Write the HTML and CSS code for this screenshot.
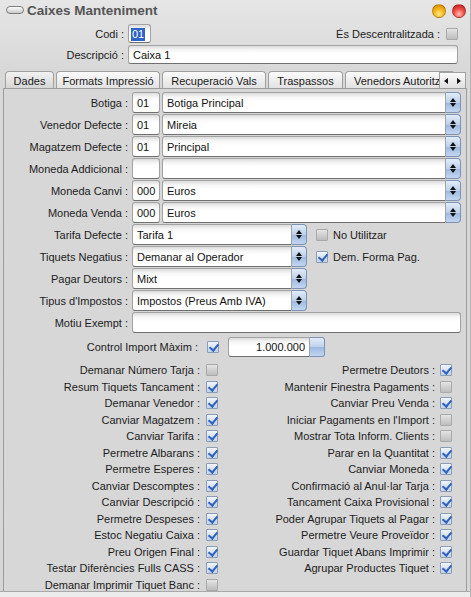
FILE: index.html
```html
<!DOCTYPE html>
<html lang="ca">
<head>
<meta charset="utf-8">
<title>Caixes Manteniment</title>
<link rel="stylesheet" href="styles.css">
</head>
<body>
<div class="window">
  <div class="titlebar">
    <span class="pill"></span>
    <span class="title">Caixes Manteniment</span>
    <span class="lights"><span class="light amber"></span><span class="light red"></span></span>
  </div>

  <div class="head">
    <div class="hrow">
      <span class="hlabel">Codi :</span>
      <span class="field codi"><span class="sel">01</span></span>
      <span class="hright">És Descentralitzada :</span>
      <span class="cb"></span>
    </div>
    <div class="hrow">
      <span class="hlabel">Descripció :</span>
      <span class="field descr">Caixa 1</span>
    </div>
  </div>

  <div class="tabs">
    <span class="tab active">Dades</span>
    <span class="tab t2">Formats Impressió</span>
    <span class="tab t3">Recuperació Vals</span>
    <span class="tab t4">Traspassos</span>
    <span class="tab t5">Venedors Autoritzats</span>
    <span class="tabnav"><span class="tri left"></span><span class="tri right"></span></span>
  </div>

  <div class="panel">
    <div class="row">
      <span class="lbl">Botiga :</span>
      <span class="field code">01</span>
      <span class="combo wide"><span class="field ctext">Botiga Principal</span><span class="spin"></span></span>
    </div>
    <div class="row">
      <span class="lbl">Venedor Defecte :</span>
      <span class="field code">01</span>
      <span class="combo wide"><span class="field ctext">Mireia</span><span class="spin"></span></span>
    </div>
    <div class="row">
      <span class="lbl">Magatzem Defecte :</span>
      <span class="field code">01</span>
      <span class="combo wide"><span class="field ctext">Principal</span><span class="spin"></span></span>
    </div>
    <div class="row">
      <span class="lbl">Moneda Addicional :</span>
      <span class="field code"></span>
      <span class="combo wide"><span class="field ctext"></span><span class="spin"></span></span>
    </div>
    <div class="row">
      <span class="lbl">Moneda Canvi :</span>
      <span class="field code">000</span>
      <span class="combo wide"><span class="field ctext">Euros</span><span class="spin"></span></span>
    </div>
    <div class="row">
      <span class="lbl">Moneda Venda :</span>
      <span class="field code">000</span>
      <span class="combo wide"><span class="field ctext">Euros</span><span class="spin"></span></span>
    </div>
    <div class="row">
      <span class="lbl">Tarifa Defecte :</span>
      <span class="combo short"><span class="field ctext">Tarifa 1</span><span class="spin"></span></span>
      <span class="cb side"></span><span class="sidetext">No Utilitzar</span>
    </div>
    <div class="row">
      <span class="lbl">Tiquets Negatius :</span>
      <span class="combo short"><span class="field ctext">Demanar al Operador</span><span class="spin"></span></span>
      <span class="cb on side"></span><span class="sidetext">Dem. Forma Pag.</span>
    </div>
    <div class="row">
      <span class="lbl">Pagar Deutors :</span>
      <span class="combo short"><span class="field ctext">Mixt</span><span class="spin"></span></span>
    </div>
    <div class="row">
      <span class="lbl">Tipus d'Impostos :</span>
      <span class="combo short"><span class="field ctext">Impostos (Preus Amb IVA)</span><span class="spin"></span></span>
    </div>
    <div class="row">
      <span class="lbl">Motiu Exempt :</span>
      <span class="field motiu"></span>
    </div>
    <div class="row ctrl">
      <span class="ctrl-lbl">Control Import Màxim :</span>
      <span class="cb on"></span>
      <span class="amount"><span class="field amt">1.000.000</span><span class="amt-btn"></span></span>
    </div>

    <div class="checks">
      <div class="c"><span>Demanar Número Tarja :</span><span class="cb"></span></div>
      <div class="c"><span>Permetre Deutors :</span><span class="cb on"></span></div>
      <div class="c"><span>Resum Tiquets Tancament :</span><span class="cb on"></span></div>
      <div class="c"><span>Mantenir Finestra Pagaments :</span><span class="cb"></span></div>
      <div class="c"><span>Demanar Venedor :</span><span class="cb on"></span></div>
      <div class="c"><span>Canviar Preu Venda :</span><span class="cb on"></span></div>
      <div class="c"><span>Canviar Magatzem :</span><span class="cb on"></span></div>
      <div class="c"><span>Iniciar Pagaments en l'Import :</span><span class="cb"></span></div>
      <div class="c"><span>Canviar Tarifa :</span><span class="cb on"></span></div>
      <div class="c"><span>Mostrar Tota Inform. Clients :</span><span class="cb"></span></div>
      <div class="c"><span>Permetre Albarans :</span><span class="cb on"></span></div>
      <div class="c"><span>Parar en la Quantitat :</span><span class="cb on"></span></div>
      <div class="c"><span>Permetre Esperes :</span><span class="cb on"></span></div>
      <div class="c"><span>Canviar Moneda :</span><span class="cb on"></span></div>
      <div class="c"><span>Canviar Descomptes :</span><span class="cb on"></span></div>
      <div class="c"><span>Confirmació al Anul·lar Tarja :</span><span class="cb on"></span></div>
      <div class="c"><span>Canviar Descripció :</span><span class="cb on"></span></div>
      <div class="c"><span>Tancament Caixa Provisional :</span><span class="cb on"></span></div>
      <div class="c"><span>Permetre Despeses :</span><span class="cb on"></span></div>
      <div class="c"><span>Poder Agrupar Tiquets al Pagar :</span><span class="cb on"></span></div>
      <div class="c"><span>Estoc Negatiu Caixa :</span><span class="cb on"></span></div>
      <div class="c"><span>Permetre Veure Proveïdor :</span><span class="cb on"></span></div>
      <div class="c"><span>Preu Origen Final :</span><span class="cb on"></span></div>
      <div class="c"><span>Guardar Tiquet Abans Imprimir :</span><span class="cb on"></span></div>
      <div class="c"><span>Testar Diferències Fulls CASS :</span><span class="cb on"></span></div>
      <div class="c"><span>Agrupar Productes Tiquet :</span><span class="cb on"></span></div>
      <div class="c"><span>Demanar Imprimir Tiquet Banc :</span><span class="cb"></span></div>
    </div>
  </div>

  <div class="footer"></div>
</div>
</body>
</html>
```

FILE: styles.css
```css
* { box-sizing: border-box; }

html, body {
  margin: 0;
  padding: 0;
  width: 471px;
  height: 597px;
  overflow: hidden;
}

.window {
  height: 597px;
  display: flex;
  flex-direction: column;
  background: linear-gradient(#e6e6e6, #d8d8d8 70px, #d6d6d6);
  font-family: "Liberation Sans", Arial, sans-serif;
  font-size: 11px;
  color: #1c1c1c;
  border-right: 1px solid #b4b4b4;
}

/* title bar */
.titlebar {
  height: 20px;
  display: flex;
  align-items: center;
  padding-left: 6px;
  flex: none;
}
.pill {
  width: 18px;
  height: 8px;
  border: 1px solid #7c7c7c;
  border-radius: 4px;
  background: linear-gradient(#fdfdfd, #c9c9c9);
  margin-right: 3px;
}
.title {
  font-weight: bold;
  font-size: 13.5px;
  color: #555;
}
.lights {
  margin-left: auto;
  display: flex;
  gap: 6px;
  padding-right: 4px;
  padding-top: 1px;
}
.light {
  width: 14px;
  height: 14px;
  border-radius: 50%;
  border: 1px solid rgba(0,0,0,0.2);
}
.light.amber {
  background: radial-gradient(circle at 50% 75%, #ffe88a 0, #f6b81a 45%, #cf7a06 100%);
}
.light.red {
  background: radial-gradient(circle at 50% 75%, #ffc0b8 0, #f2524a 45%, #b3161a 100%);
}

/* header fields */
.head {
  padding-top: 4px;
  padding-right: 12px;
  display: flex;
  flex-direction: column;
  gap: 2px;
  flex: none;
}
.hrow {
  height: 19px;
  display: flex;
  align-items: center;
}
.hlabel {
  width: 124px;
  text-align: right;
  margin-right: 4px;
}
.hright {
  margin-left: auto;
  margin-right: 6px;
}

.field {
  display: flex;
  align-items: center;
  height: 100%;
  background: linear-gradient(#dcdcdc, #f6f6f6 4px, #fff 8px);
  border: 1px solid #a2a2a2;
  border-bottom-color: #6f6f6f;
  border-radius: 3px;
  padding: 1px 0 0 4px;
  white-space: nowrap;
  overflow: hidden;
  color: #111;
}
.codi {
  width: 23px;
  padding-left: 2px;
}
.sel {
  background: #2f63c6;
  color: #fff;
  padding: 0 1px;
  line-height: 13px;
}
.descr {
  width: 330px;
}

/* tabs */
.tabs {
  margin-top: 7px;
  height: 17px;
  display: flex;
  padding-left: 5px;
  gap: 2px;
  flex: none;
  position: relative;
  overflow: hidden;
  width: 466px;
}
.tab {
  flex: none;
  display: flex;
  align-items: center;
  justify-content: center;
  border: 1px solid #a0a0a0;
  border-bottom: none;
  border-radius: 4px 4px 0 0;
  background: linear-gradient(#fafafa, #e2e2e2);
  padding-top: 1px;
  white-space: nowrap;
  color: #1a1a1a;
}
.tab.active { width: 49px; background: linear-gradient(#f2f2f2, #d6d6d6); }
.t2 { width: 104px; }
.t3 { width: 104px; }
.t4 { width: 75px; }
.t5 { width: 110px; justify-content: flex-start; padding-left: 8px; }
.tabnav {
  position: absolute;
  right: 0;
  top: 1px;
  width: 27px;
  height: 16px;
  background: linear-gradient(#fafafa, #e0e0e0);
  border: 1px solid #a0a0a0;
  border-bottom: none;
  display: flex;
  align-items: center;
  justify-content: space-around;
}
.tri { width: 0; height: 0; border-top: 3px solid transparent; border-bottom: 3px solid transparent; }
.tri.left { border-right: 4px solid #111; }
.tri.right { border-left: 4px solid #111; }

/* tab panel */
.panel {
  flex: none;
  height: 503px;
  margin: 0 3px 0 3px;
  border: 1px solid #9c9c9c;
  border-bottom: none;
  background: #d7d7d7;
  padding-top: 3px;
  overflow: hidden;
  display: flex;
  flex-direction: column;
  gap: 1px;
}
.row {
  height: 21px;
  display: flex;
  align-items: center;
  flex: none;
}
.lbl {
  width: 124px;
  text-align: right;
  margin-right: 4px;
  white-space: nowrap;
}
.field.code {
  width: 28px;
  margin-right: 2px;
  padding-left: 4px;
}
.combo {
  height: 100%;
  display: flex;
}
.combo .field {
  flex: 1;
  border-radius: 3px 0 0 3px;
}
.combo.wide { width: 299px; }
.combo.short { width: 175px; }

/* stepper button with up / down arrows */
.spin {
  flex: none;
  width: 15px;
  height: 100%;
  position: relative;
  border: 1px solid #7d93b6;
  border-left: none;
  border-radius: 0 4px 4px 0;
  background: linear-gradient(#e2ecf8, #bcd0ec 50%, #9db9e0 51%, #c2d6f0);
}
.spin::before, .spin::after {
  content: "";
  position: absolute;
  left: 4px;
  border-left: 3px solid transparent;
  border-right: 3px solid transparent;
}
.spin::before { top: 5px; border-bottom: 4px solid #111; }
.spin::after { bottom: 5px; border-top: 4px solid #111; }

.field.motiu { width: 329px; }

.cb {
  flex: none;
  width: 12px;
  height: 12px;
  border: 1px solid #a9a9a9;
  border-radius: 1px;
  background: linear-gradient(#e4e4e4, #bdbdbd);
  position: relative;
}
.cb.on {
  border-color: #8b9cb6;
  background: linear-gradient(#f2f5fa, #c3d2e8);
}
.cb.on::after {
  content: "";
  position: absolute;
  left: 3px;
  top: 0;
  width: 4px;
  height: 7px;
  border-right: 2px solid #2f63be;
  border-bottom: 2px solid #2f63be;
  transform: rotate(40deg);
}
.cb.side { margin-left: 9px; }
.sidetext { margin-left: 5px; }

.row.ctrl { margin-top: 2px; }
.ctrl-lbl {
  width: 194px;
  text-align: right;
}
.row.ctrl .cb { margin-left: 9px; }
.amount {
  margin-left: 9px;
  height: 20px;
  width: 97px;
  display: flex;
}
.field.amt {
  flex: 1;
  justify-content: flex-end;
  padding-right: 4px;
  border-radius: 3px 0 0 3px;
}
.amt-btn {
  width: 15px;
  height: 100%;
  border: 1px solid #7d93b6;
  border-left: none;
  border-radius: 0 3px 3px 0;
  background: linear-gradient(#e2ecf8, #bcd0ec 50%, #9db9e0 51%, #c2d6f0);
}

/* checkbox grid */
.checks {
  margin-top: 4px;
  display: grid;
  grid-template-columns: 216px 235px;
  grid-auto-rows: 16.5px;
}
.c {
  display: flex;
  align-items: center;
  justify-content: flex-end;
  white-space: nowrap;
}
.c:nth-child(odd) { padding-right: 2px; }
.c:nth-child(odd) .cb { margin-left: 6px; }
.c:nth-child(even) { padding-right: 3px; }
.c:nth-child(even) .cb { margin-left: 5px; }

.footer {
  flex: 1;
  border-top: 1px solid #a8a8a8;
  background: #ececec;
}
```
